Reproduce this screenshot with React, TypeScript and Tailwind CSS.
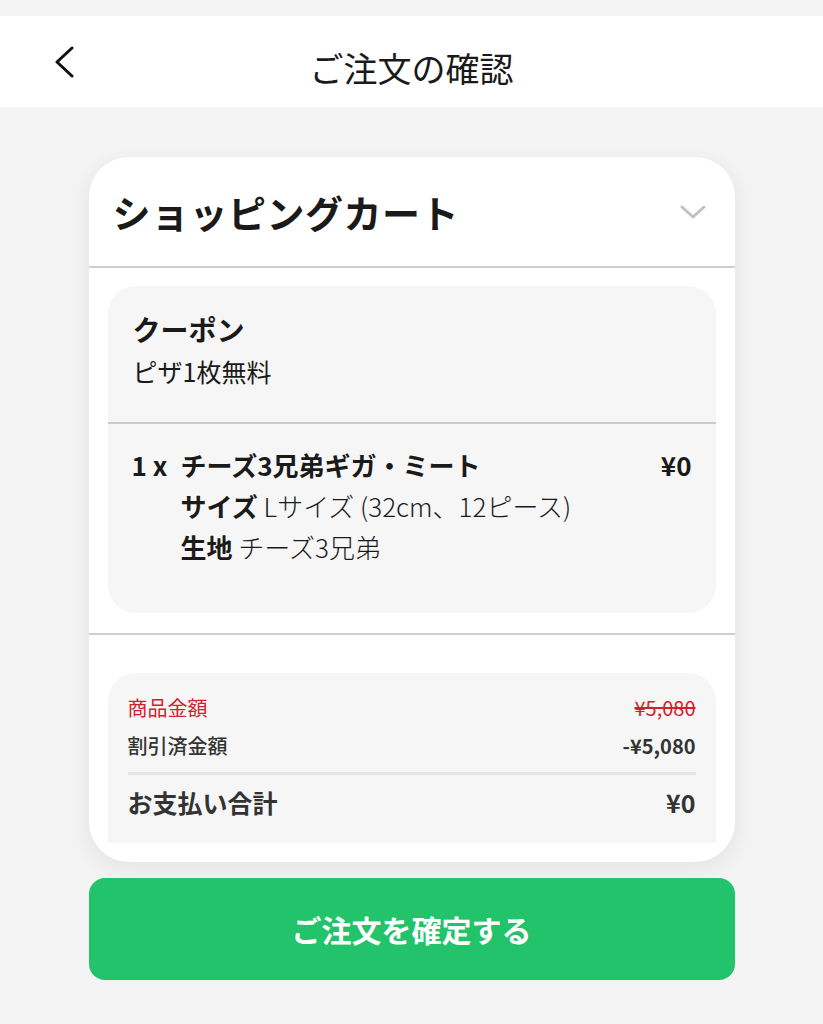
const App = () => {
  return (
    <div
      className="min-h-screen bg-[#f4f4f4] pt-4 text-[#1a1a1a]"
      style={{ fontFamily: '"Noto Sans CJK JP", "Noto Sans", sans-serif' }}
    >
      {/* header */}
      <div className="grid h-[91px] grid-cols-[1fr_auto_1fr] items-center bg-white">
        <div className="pl-[54px]">
          <svg width="22" height="32" viewBox="0 0 22 32" fill="none">
            <path d="M18 2 L3 16 L18 30" stroke="#111" strokeWidth="3" strokeLinecap="round" strokeLinejoin="round" />
          </svg>
        </div>
        <h1 className="pt-[12px] text-[34px] leading-none font-normal">ご注文の確認</h1>
        <div />
      </div>

      {/* card */}
      <div className="mx-auto mt-[50px] w-[646px] overflow-hidden rounded-[40px] bg-white pb-[19px] shadow-[0_6px_24px_rgba(0,0,0,0.08)]">
        <div className="flex h-[109px] items-center justify-between pr-[28px] pl-[24px]">
          <h2 className="text-[38px] leading-none font-bold tracking-[0.5px]">ショッピングカート</h2>
          <svg width="28" height="16" viewBox="0 0 28 16" fill="none">
            <path d="M3 3 L14 13 L25 3" stroke="#c2c2c2" strokeWidth="3" strokeLinecap="round" strokeLinejoin="round" />
          </svg>
        </div>
        <div className="h-[2px] bg-[#cfcfcf]" />

        <div className="px-[19px] pt-[18px]">
          <div className="rounded-[28px] bg-[#f6f6f6]">
            <div className="px-[25px] pt-[22px] pb-[30px]">
              <div className="text-[28px] leading-[42px] font-bold">クーポン</div>
              <div className="text-[25px] leading-[42px]">ピザ1枚無料</div>
            </div>
            <div className="h-[2px] bg-[#cbcbd3]" />
            <div className="flex px-[24px] pt-[20px] pb-[46px] text-[26px] leading-[41px]">
              <div className="w-[49px] font-bold">1 x</div>
              <div className="flex-1">
                <div className="font-bold">チーズ3兄弟ギガ・ミート</div>
                <div>
                  <span className="font-bold">サイズ</span>{' '}
                  <span className="font-light">Lサイズ (32cm、12ピース)</span>
                </div>
                <div>
                  <span className="font-bold">生地</span>{' '}
                  <span className="font-light">チーズ3兄弟</span>
                </div>
              </div>
              <div className="font-bold">¥0</div>
            </div>
          </div>
        </div>

        <div className="mt-[20px] h-[2px] bg-[#cfcfcf]" />

        <div className="px-[19px] pt-[38px]">
          <div className="rounded-t-[28px] bg-[#f6f6f6] px-[20px] pt-[16px] pb-[22px] text-[#333]">
            <div className="flex justify-between text-[20px] leading-[38px] text-[#d2202b]">
              <span>商品金額</span>
              <span className="line-through">¥5,080</span>
            </div>
            <div className="flex justify-between text-[20px] leading-[38px]">
              <span className="font-medium">割引済金額</span>
              <span className="font-bold">-¥5,080</span>
            </div>
            <div className="mt-[7px] h-[3px] bg-[#e6e6e6]" />
            <div className="mt-[8px] flex justify-between text-[25px] leading-[38px] font-bold">
              <span>お支払い合計</span>
              <span>¥0</span>
            </div>
          </div>
        </div>
      </div>

      {/* confirm button */}
      <div className="mx-auto mt-[16px] w-[646px]">
        <button className="flex h-[102px] w-full items-center justify-center rounded-[16px] bg-[#22c36b] text-[30px] font-bold text-white">
          ご注文を確定する
        </button>
      </div>
    </div>
  )
}

export default App
